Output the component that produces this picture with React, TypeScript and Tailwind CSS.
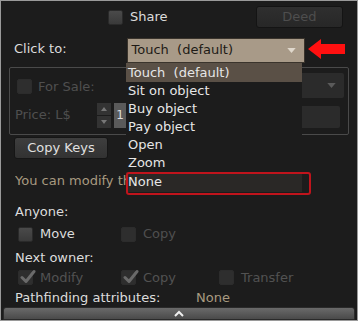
import React from "react";

const font = { fontFamily: '"DejaVu Sans", sans-serif' };

function Box({ checked = false, dim = false }: { checked?: boolean; dim?: boolean }) {
  return (
    <div
      className={`relative w-[15px] h-[15px] rounded-[2px] border ${
        dim ? "border-[#2c2c2c] bg-[#2e2e2e]" : "border-[#2a2a2a] bg-gradient-to-b from-[#4a4a4a] to-[#3a3a3a]"
      }`}
    >
      {checked && (
        <svg className="absolute left-[1px] top-[-2px]" width="16" height="16" viewBox="0 0 16 16">
          <path d="M2 8.5 L6 12.5 L14 2.5" stroke="#6a6a6a" strokeWidth="3" fill="none" strokeLinejoin="round" strokeLinecap="round" />
        </svg>
      )}
    </div>
  );
}

export default function App() {
  return (
    <div
      className="relative w-[358px] h-[321px] bg-[#1c1c1c] border border-[#9a9a9a] overflow-hidden text-[12.5px] text-[#dcdcdc]"
      style={font}
    >
      <div className="flex flex-col">
        {/* row 1 */}
        <div className="h-[32px] flex items-center">
          <div className="ml-[107px] flex items-center gap-[7px]">
            <Box />
            <span className="text-[13px]">Share</span>
          </div>
          <div className="ml-auto mr-[14px] w-[87px] h-[22px] rounded-[3px] border border-[#141414] bg-gradient-to-b from-[#2f2f2f] to-[#272727] flex items-center justify-center text-[#4e4e4e] text-[13px]">
            Deed
          </div>
        </div>
        {/* row 2 */}
        <div className="h-[32px] flex items-center">
          <span className="ml-[13px] text-[13px]">Click to:</span>
          <div className="ml-[60px] w-[178px] h-[25px] mt-[2px] border border-[#3a342c] bg-[#a89a88] flex items-center text-[#1e1a16] text-[13px] pl-[4px]">
            <span className="whitespace-pre">Touch  (default)</span>
            <svg className="ml-auto mr-[8px]" width="9" height="5" viewBox="0 0 10 6">
              <path d="M0 0 L10 0 L5 6 Z" fill="#e0d8cc" />
            </svg>
          </div>
        </div>
        {/* for sale box */}
        <div className="mx-[8px] mt-[2px] h-[68px] border border-[#4a4a4a] rounded-[2px] relative">
          <div className="flex items-center pt-[9px] pl-[7px] gap-[6px] text-[#4f4f4f]">
            <Box dim />
            <span className="text-[13px]">For Sale:</span>
          </div>
          <div className="absolute right-[4px] top-[5px] w-[60px] h-[25px] rounded-[2px] bg-[#2b2b2b] flex items-center justify-end pr-[8px]">
            <svg width="9" height="5" viewBox="0 0 10 6">
              <path d="M0 0 L10 0 L5 6 Z" fill="#5a5a5a" />
            </svg>
          </div>
          <div className="flex items-center pl-[5px] mt-[6px] text-[#4f4f4f]">
            <span className="text-[13px] w-[82px]">Price: L$</span>
            <div className="flex flex-col gap-[1px]">
              <div className="w-[14px] h-[12px] bg-[#333] flex items-center justify-center">
                <svg width="6" height="4" viewBox="0 0 6 4"><path d="M0 4 L6 4 L3 0Z" fill="#777" /></svg>
              </div>
              <div className="w-[14px] h-[12px] bg-[#333] flex items-center justify-center">
                <svg width="6" height="4" viewBox="0 0 6 4"><path d="M0 0 L6 0 L3 4Z" fill="#777" /></svg>
              </div>
            </div>
            <div className="ml-[3px] w-[12px] h-[25px] bg-[#5a5a5a] text-[#ddd] text-[12px] flex items-center justify-center">1</div>
          </div>
          <div className="absolute right-[8px] top-[38px] w-[46px] h-[22px] rounded-[2px] bg-[#2b2b2b]" />
        </div>
        {/* copy keys */}
        <div className="h-[26px] flex items-center">
          <div className="ml-[13px] w-[94px] h-[22px] rounded-[3px] border border-[#161616] bg-gradient-to-b from-[#3e3e3e] to-[#323232] flex items-center justify-center text-[13px] text-[#e0e0e0]">
            Copy Keys
          </div>
        </div>
        <div className="h-[36px] flex items-center pt-[4px]">
          <span className="ml-[14px] w-[111px] overflow-hidden whitespace-nowrap text-[#a89a80] text-[13px]">You can modify this object</span>
        </div>
        <div className="h-[24px] flex items-end">
          <span className="ml-[14px] text-[13px]">Anyone:</span>
        </div>
        <div className="h-[24px] flex items-center pt-[2px]">
          <div className="ml-[17px] flex items-center gap-[7px] w-[103px]">
            <Box />
            <span className="text-[13px]">Move</span>
          </div>
          <div className="flex items-center gap-[7px] text-[#4f4f4f]">
            <Box dim />
            <span className="text-[13px]">Copy</span>
          </div>
        </div>
        <div className="h-[22px] flex items-end">
          <span className="ml-[14px] text-[13px]">Next owner:</span>
        </div>
        <div className="h-[21px] flex items-center text-[#525252] text-[13px]">
          <div className="ml-[17px] flex items-center gap-[7px] w-[103px]">
            <Box checked dim />
            <span>Modify</span>
          </div>
          <div className="flex items-center gap-[7px] w-[98px]">
            <Box checked dim />
            <span>Copy</span>
          </div>
          <div className="flex items-center gap-[7px]">
            <Box dim />
            <span>Transfer</span>
          </div>
        </div>
        <div className="h-[19px] flex items-center text-[13px]">
          <span className="ml-[14px] w-[181px]">Pathfinding attributes:</span>
          <span className="text-[#a89a80]">None</span>
        </div>
        <div className="mx-[2px] h-[13px] rounded-t-[3px] bg-gradient-to-b from-[#6a6a6a] to-[#4a4a4a] border border-[#2a2a2a] flex items-center justify-center">
          <svg width="10" height="7" viewBox="0 0 10 7">
            <path d="M1 6 L5 2 L9 6" stroke="#eee" strokeWidth="2" fill="none" />
          </svg>
        </div>
      </div>

      {/* dropdown list overlay */}
      <div className="absolute left-[125px] top-[62px] w-[176px] h-[131px] bg-[#1c1c1c] text-[13px] text-[#e6e6e6]">
        <div className="h-[19px] bg-[#5a5046] pl-[2px] flex items-center whitespace-pre">Touch  (default)</div>
        <div className="h-[18px] pl-[2px] flex items-center">Sit on object</div>
        <div className="h-[18px] pl-[2px] flex items-center">Buy object</div>
        <div className="h-[18px] pl-[2px] flex items-center">Pay object</div>
        <div className="h-[18px] pl-[2px] flex items-center">Open</div>
        <div className="h-[18px] pl-[2px] flex items-center">Zoom</div>
        <div className="h-[20px] pl-[2px] flex items-center bg-[#2a2826]">None</div>
      </div>
      {/* red highlight */}
      <div className="absolute left-[125px] top-[171px] w-[185px] h-[23px] rounded-[3px] border-2 border-[#c0141c]" />
      {/* red arrow */}
      <svg className="absolute left-[307px] top-[38px]" width="37" height="20" viewBox="0 0 37 20">
        <path d="M0 10 L13 0 L13 5 L37 5 L37 15 L13 15 L13 20 Z" fill="#ff1010" />
      </svg>
    </div>
  );
}
